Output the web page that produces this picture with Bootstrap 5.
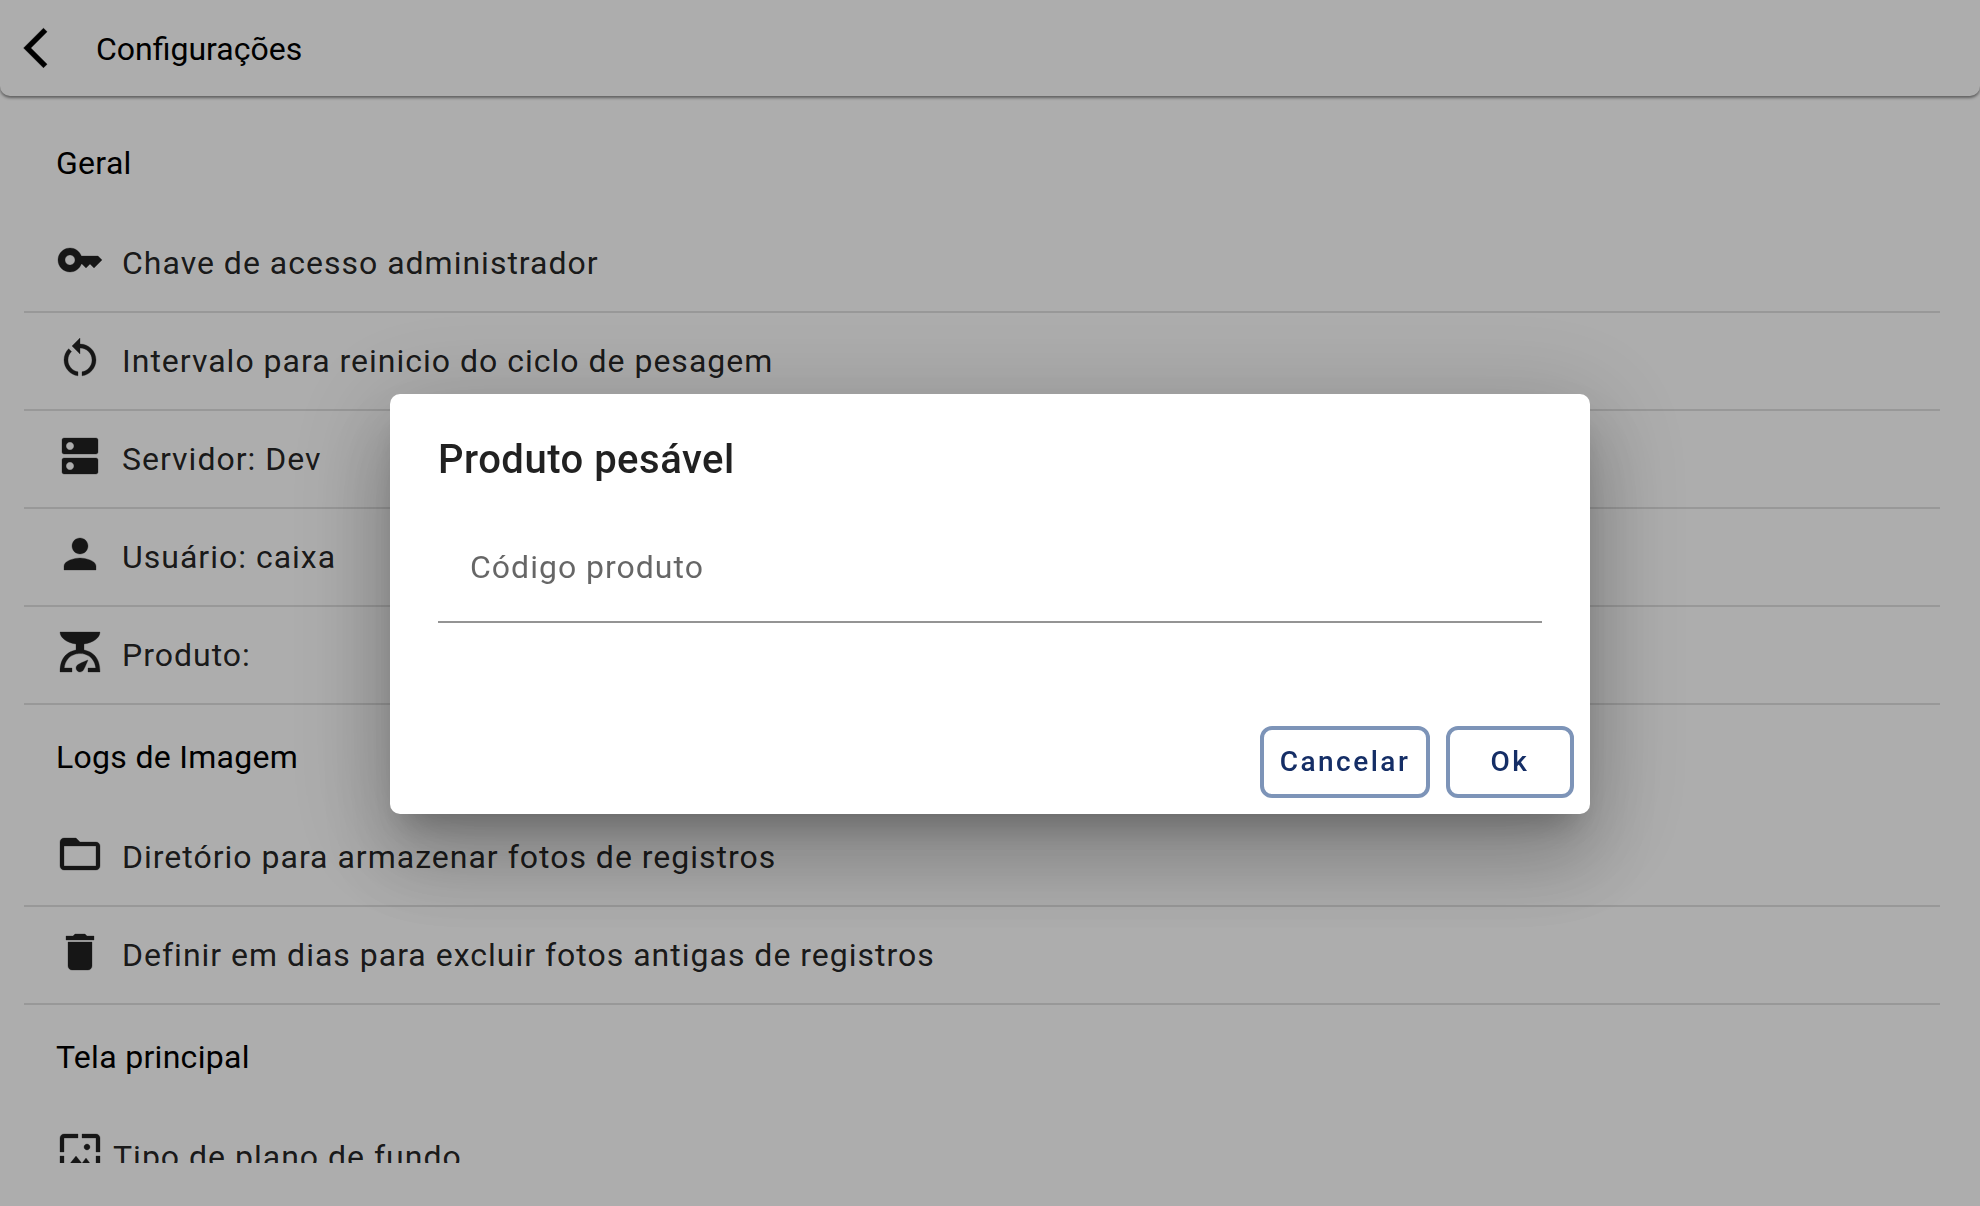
<!DOCTYPE html>
<html lang="pt-BR">
<head>
<meta charset="utf-8">
<title>Configurações</title>
<link href="https://cdn.jsdelivr.net/npm/bootstrap@5.3.0/dist/css/bootstrap.min.css" rel="stylesheet">
<style>
html,body{height:100%;overflow:hidden}
body{font-family:Roboto,"Liberation Sans",sans-serif;background:#fff;color:rgba(0,0,0,.87)}
.app-bar{height:96px;border-radius:0 0 10px 10px;box-shadow:0 2px 3px rgba(0,0,0,.45);padding-left:12px;background:#fff}
.app-bar svg{width:48px;height:48px;fill:#000;stroke:#000;stroke-width:.25}
.app-title{font-size:32px;line-height:40px;color:#000;margin-left:36px;margin-top:2px}
.settings{height:1067px;overflow:hidden;padding:15px 40px 0 24px}
.sect{height:104px;padding-left:32px;font-size:32px;line-height:104px;color:#000;letter-spacing:.3px}
.row-item{height:98px;border-bottom:2px solid rgba(0,0,0,.12);padding-left:32px;padding-top:21px;font-size:32px;letter-spacing:1px;line-height:48px;color:rgba(0,0,0,.87)}
.row-item svg{width:48px;height:48px;fill:#212121;stroke:#212121;stroke-width:.15;flex:none;margin-right:18px}
.row-item span{margin-top:3px}
.row-last{border-bottom:0}
.row-last svg{margin-right:9px}
.modal-backdrop.scrim{background:#000;opacity:.32}
.dlg{width:1200px;max-width:none;margin:394px 0 0 390px}
.dlg .modal-content{height:420px;border:0;border-radius:10px;box-shadow:0 22px 30px -14px rgba(0,0,0,.22),0 48px 76px 6px rgba(0,0,0,.15),0 18px 100px 16px rgba(0,0,0,.16)}
.dlg-title{font-size:40px;font-weight:500;letter-spacing:.5px;line-height:48px;margin:0;padding:42px 48px 0;color:rgba(0,0,0,.87)}
.dlg-field{margin:0 48px;padding:0}
.dlg-input.form-control{height:111px;margin-top:28px;border:0;border-bottom:2px solid #949494;border-radius:0;padding:0 32px;font-size:32px;letter-spacing:1px;box-shadow:none;background:transparent}
.dlg-input.form-control::placeholder{color:rgba(0,0,0,.6);opacity:1}
.dlg-actions{padding:0 16px 16px;gap:16px}
.dlg-btn.btn{height:72px;border:4px solid #7d94b8;border-radius:12px;background:#fff;color:#152e66;font-size:28px;font-weight:500;letter-spacing:2.5px;line-height:1;padding:0}
.btn-cancel{width:170px}
.btn-ok{width:128px}
</style>
</head>
<body>
<header class="app-bar d-flex align-items-center">
  <svg viewBox="0 0 24 24"><path d="M17.51 3.87L15.73 2.1 5.84 12l9.9 9.9 1.77-1.77L9.38 12l8.13-8.13z"/></svg>
  <div class="app-title">Configurações</div>
</header>
<main class="settings">
  <div class="sect">Geral</div>
  <div class="row-item d-flex"><svg viewBox="0 0 24 24"><path d="M21 10h-8.35C11.83 7.67 9.61 6 7 6c-3.31 0-6 2.69-6 6s2.69 6 6 6c2.61 0 4.83-1.67 5.65-4H13l2 2 2-2 2 2 4-4.04L21 10zM7 14.5c-1.38 0-2.5-1.12-2.5-2.5S5.62 9.500 7 9.500s2.500 1.120 2.500 2.500-1.120 2.500-2.500 2.500z"/></svg><span>Chave de acesso administrador</span></div>
  <div class="row-item d-flex"><svg viewBox="0 0 24 24"><path d="M12 5V2L8 6l4 4V7c3.31 0 6 2.69 6 6 0 2.97-2.16 5.43-5 5.91v2.02c3.95-.49 7-3.85 7-7.93 0-4.42-3.58-8-8-8zm-6 8c0-1.65.67-3.15 1.76-4.24L6.34 7.34C4.9 8.79 4 10.79 4 13c0 4.08 3.05 7.44 7 7.93v-2.02c-2.84-.48-5-2.94-5-5.91z"/></svg><span>Intervalo para reinicio do ciclo de pesagem</span></div>
  <div class="row-item d-flex"><svg viewBox="0 0 24 24"><path d="M20 13H4c-.55 0-1 .45-1 1v6c0 .55.45 1 1 1h16c.55 0 1-.45 1-1v-6c0-.55-.45-1-1-1zM7 19c-1.1 0-2-.9-2-2s.9-2 2-2 2 .9 2 2-.9 2-2 2zM20 3H4c-.55 0-1 .45-1 1v6c0 .55.45 1 1 1h16c.55 0 1-.45 1-1V4c0-.55-.45-1-1-1zM7 9c-1.1 0-2-.9-2-2s.9-2 2-2 2 .9 2 2-.9 2-2 2z"/></svg><span>Servidor: Dev</span></div>
  <div class="row-item d-flex"><svg viewBox="0 0 24 24"><path d="M12 12c2.21 0 4-1.79 4-4s-1.79-4-4-4-4 1.79-4 4 1.79 4 4 4zm0 2c-2.67 0-8 1.34-8 4v2h16v-2c0-2.66-5.33-4-8-4z"/></svg><span>Usuário: caixa</span></div>
  <div class="row-item d-flex"><svg viewBox="0 0 24 24"><path d="M14,11V8c4.56-.58,8-3.1,8-6H2c0,2.9,3.44,5.42,8,6l0,3c-3.68,.73-8,3.1-8,11h6v-2H4.13c.93-6.83,6.65-7.2,7.87-7.2s6.94,.37,7.87,7.2H16v2h6C22,14.1,17.68,11.73,14,11z M12,22c-1.1,0-2-.9-2-2c0-.55,.22-1.05,.59-1.41C11.39,17.79,16,16,16,16s-1.79,4.61-2.59,5.41C13.05,21.78,12.55,22,12,22z"/></svg><span>Produto:</span></div>
  <div class="sect">Logs de Imagem</div>
  <div class="row-item d-flex"><svg viewBox="0 0 24 24"><path d="M20 6h-8l-2-2H4c-1.1 0-1.99.9-1.99 2L2 18c0 1.1.9 2 2 2h16c1.1 0 2-.9 2-2V8c0-1.1-.9-2-2-2zm0 12H4V8h16v10z"/></svg><span>Diretório para armazenar fotos de registros</span></div>
  <div class="row-item d-flex"><svg viewBox="0 0 24 24"><path d="M6 19c0 1.1.9 2 2 2h8c1.1 0 2-.9 2-2V7H6v12zM19 4h-3.5l-1-1h-5l-1 1H5v2h14V4z"/></svg><span>Definir em dias para excluir fotos antigas de registros</span></div>
  <div class="sect">Tela principal</div>
  <div class="row-item row-last d-flex"><svg viewBox="0 0 24 24"><path d="M4 4h7V2H4c-1.1 0-2 .9-2 2v7h2V4zm6 9l-4 5h12l-3-4-2.03 2.71L10 13zm7-4.5c0-.83-.67-1.5-1.5-1.5S14 7.67 14 8.5s.67 1.5 1.5 1.5S17 9.33 17 8.5zM20 2h-7v2h7v7h2V4c0-1.1-.9-2-2-2zm0 18h-7v2h7c1.1 0 2-.9 2-2v-7h-2v7zM4 13H2v7c0 1.1.9 2 2 2h7v-2H4v-7z"/></svg><span>Tipo de plano de fundo</span></div>
</main>
<div class="modal-backdrop scrim"></div>
<div class="modal d-block" tabindex="-1" role="dialog">
  <div class="modal-dialog dlg">
    <div class="modal-content">
      <h2 class="dlg-title">Produto pesável</h2>
      <div class="dlg-field"><input class="form-control dlg-input" type="text" placeholder="Código produto"></div>
      <div class="d-flex justify-content-end dlg-actions mt-auto">
        <button type="button" class="btn dlg-btn btn-cancel">Cancelar</button>
        <button type="button" class="btn dlg-btn btn-ok">Ok</button>
      </div>
    </div>
  </div>
</div>
<script src="https://cdn.jsdelivr.net/npm/bootstrap@5.3.0/dist/js/bootstrap.bundle.min.js"></script>
</body>
</html>
